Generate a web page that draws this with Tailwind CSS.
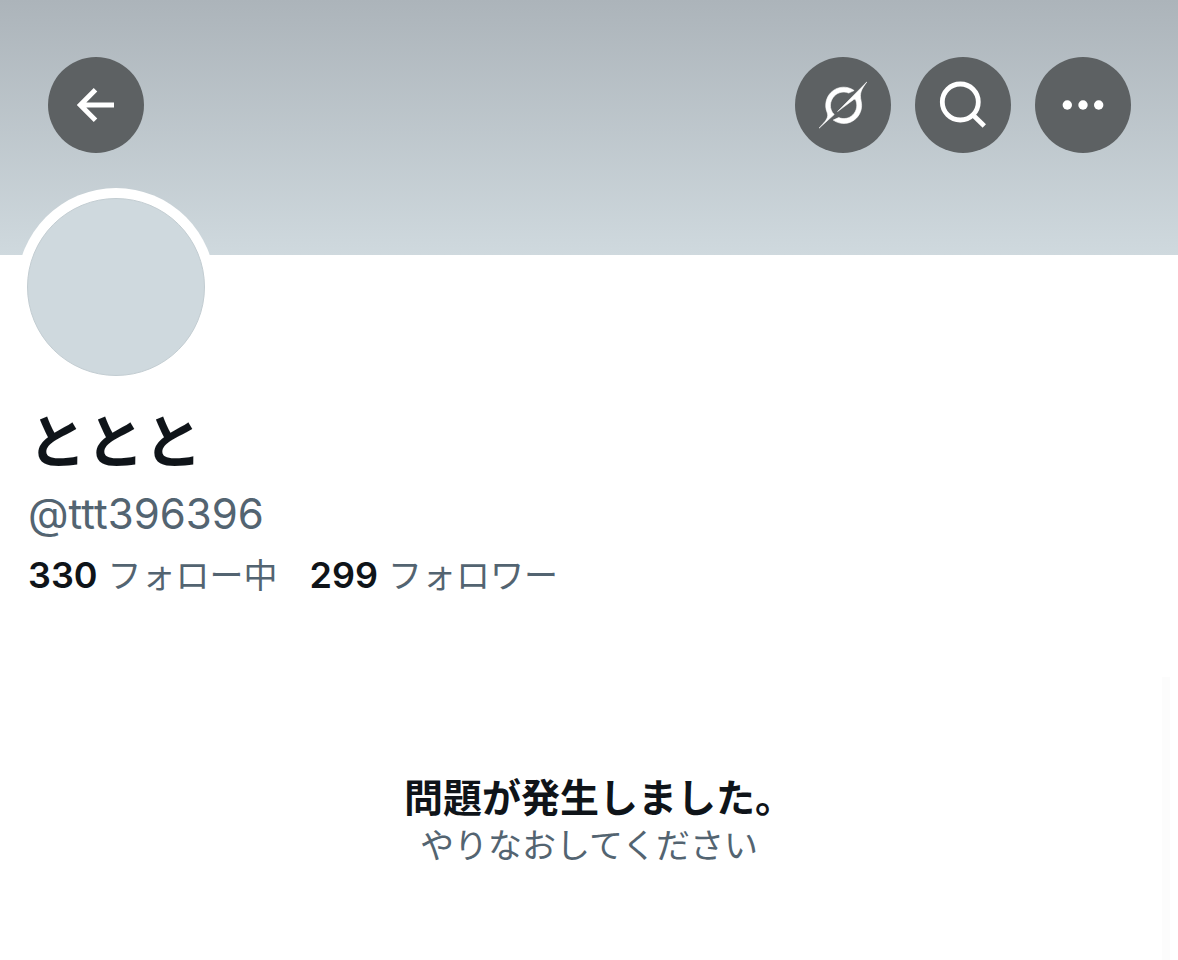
<!DOCTYPE html>
<html lang="ja">
<head>
  <meta charset="UTF-8">
  <meta name="viewport" content="width=device-width, initial-scale=1.0">
  <title>ととと (@ttt396396)</title>
  <script src="https://cdn.jsdelivr.net/npm/@tailwindcss/browser@4"></script>
</head>
<body class="bg-white text-[#0f1419] font-[Inter,'Noto_Sans_CJK_JP',sans-serif]">

  <div class="flex flex-col min-h-screen">
    <!-- Banner -->
    <header class="h-[255px] pl-12 pr-[47px] pt-[57px] bg-linear-to-b from-[#acb4ba] to-[#cfd9de]">
      <nav class="flex items-center justify-between">
        <button type="button" aria-label="戻る" class="flex size-24 items-center justify-center rounded-full bg-[#5d6163]">
          <svg class="size-12" viewBox="0 0 48 48" fill="none" stroke="#fff" stroke-width="5">
            <path d="M23.5 8.8L8.3 24l15.2 15.2M9 24h33" />
          </svg>
        </button>
        <div class="flex gap-6">
          <button type="button" aria-label="Grok" class="flex size-24 items-center justify-center rounded-full bg-[#5d6163]">
            <svg class="size-12" viewBox="0 0 33 32" fill="#fff" stroke="#fff" stroke-width="0.4" stroke-linejoin="round">
              <path d="M12.745 20.54l10.97-8.19c.539-.4 1.307-.244 1.564.38 1.349 3.288.746 7.241-1.938 9.955-2.683 2.714-6.417 3.31-9.83 1.954l-3.728 1.745c5.347 3.697 11.84 2.782 15.898-1.324 3.219-3.255 4.216-7.692 3.284-11.693l.008.009c-1.351-5.878.332-8.227 3.782-13.031L33 0l-4.54 4.59v-.014L12.743 20.544m-2.263 1.987c-3.837-3.707-3.175-9.446.1-12.755 2.42-2.449 6.388-3.448 9.852-1.979l3.72-1.737c-.67-.49-1.53-1.017-2.515-1.387-4.455-1.854-9.789-.931-13.41 2.728-3.483 3.523-4.579 8.94-2.697 13.561 1.405 3.454-.899 5.898-3.22 8.364C1.49 30.2.666 31.074 0 32l10.478-9.466" />
            </svg>
          </button>
          <button type="button" aria-label="検索" class="flex size-24 items-center justify-center rounded-full bg-[#5d6163]">
            <svg class="size-12" viewBox="0 0 48 48" fill="none" stroke="#fff" stroke-width="4.8">
              <circle cx="21.3" cy="21" r="18" />
              <path d="M34 34l11.3 11" />
            </svg>
          </button>
          <button type="button" aria-label="もっと見る" class="flex size-24 items-center justify-center rounded-full bg-[#5d6163]">
            <svg class="size-12" viewBox="0 0 48 48" fill="#fff">
              <circle cx="8.3" cy="24" r="4.7" />
              <circle cx="24" cy="24" r="4.7" />
              <circle cx="39.7" cy="24" r="4.7" />
            </svg>
          </button>
        </div>
      </nav>
    </header>

    <!-- Profile -->
    <section class="px-7">
      <div class="-mt-[67px] -ml-[11px] size-[198px] rounded-full bg-white p-[10px]">
        <div class="size-full rounded-full border border-[#c3cdd2] bg-[#cfd9de]"></div>
      </div>
      <h1 class="mt-5 text-[58px] leading-[72px] font-bold">ととと</h1>
      <p class="mt-1 text-[42px] leading-[64px] text-[#536471]">@ttt396396</p>
      <div class="flex gap-8 text-[34px] leading-[58px] text-[#536471]">
        <a href="#" class="flex items-baseline gap-2.5"><span class="text-[36px] font-semibold text-[#0f1419]">330</span>フォロー中</a>
        <a href="#" class="flex items-baseline gap-2.5"><span class="text-[36px] font-semibold text-[#0f1419]">299</span>フォロワー</a>
      </div>
    </section>

    <!-- Error state -->
    <main class="mt-[72px] mr-2 flex-1 border-r-8 border-[#fcfcfc] pt-[97px] pl-4 text-center">
      <h2 class="pl-5 text-[39px] leading-[48px] font-bold">問題が発生しました。</h2>
      <p class="text-[34px] leading-[48px] text-[#536471]">やりなおしてください</p>
    </main>
  </div>

</body>
</html>
